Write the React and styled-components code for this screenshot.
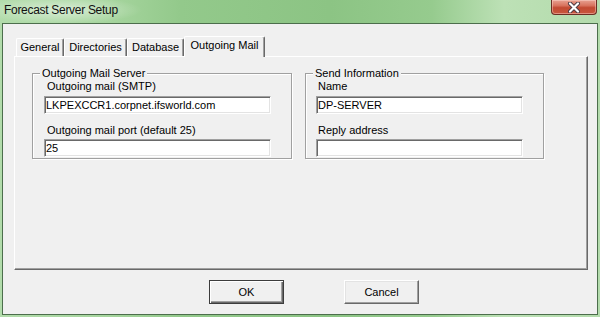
import React from 'react'
import styled, { createGlobalStyle } from 'styled-components'

const GlobalStyle = createGlobalStyle`
    html, body {
        margin: 0;
        padding: 0;
        width: 600px;
        height: 317px;
        overflow: hidden;
        background: #a4d59c;
    }
    * {
        box-sizing: border-box;
    }
`;

const Window = styled.div`
    width: 600px;
    height: 317px;
    display: flex;
    flex-direction: column;
    font-family: "Liberation Sans", Arial, sans-serif;
    font-size: 11px;
    color: #000;
    background:
        radial-gradient(ellipse 80px 14px at 62px 10px, rgba(255,255,255,0.55), rgba(255,255,255,0) 100%),
        linear-gradient(90deg, #b2dcab 0%, #a6d59e 18%, #93c98b 30%, #8cc484 55%, #96cb8e 72%, #bde1b6 84%, #b3dbac 100%);
`;

const TitleBar = styled.div`
    height: 23px;
    display: flex;
    justify-content: space-between;
    align-items: flex-start;
    flex-shrink: 0;
`;

const Title = styled.div`
    padding-left: 4px;
    line-height: 21px;
    font-size: 12px;
    letter-spacing: -0.3px;
    color: #111;
`;

const CloseButton = styled.div`
    width: 46px;
    height: 15px;
    margin-right: 3px;
    border: 1px solid #6b2e24;
    border-top: none;
    border-radius: 0 0 4px 4px;
    background: linear-gradient(#e7a292 0%, #d8735e 40%, #c24a32 55%, #c8583e 100%);
    box-shadow: inset 0 0 0 1px rgba(255, 220, 210, 0.45);
    display: flex;
    align-items: center;
    justify-content: center;
`;

const Frame = styled.div`
    flex: 1;
    display: flex;
    padding: 0 2px 2px 2px;
`;

const Client = styled.div`
    flex: 1;
    display: flex;
    flex-direction: column;
    border: 1px solid #4c6e4c;
    background: #f0f0f0;
    padding: 12px 9px 0 11px;
`;

const TabStrip = styled.div`
    height: 20px;
    display: flex;
    align-items: flex-end;
    padding-left: 2px;
    position: relative;
    z-index: 2;
`;

const Tab = styled.div`
    width: ${p => p.$w}px;
    height: ${p => (p.$active ? 21 : 18)}px;
    margin-bottom: ${p => (p.$active ? -1 : 0)}px;
    background: #f0f0f0;
    border: 1px solid #fff;
    border-right-color: #696969;
    border-bottom: none;
    border-radius: 2px 2px 0 0;
    box-shadow: inset -1px 0 #a0a0a0;
    text-align: center;
    line-height: ${p => (p.$active ? 17 : 16)}px;
    white-space: nowrap;
`;

const Panel = styled.div`
    height: 214px;
    border: 1px solid #fff;
    border-right-color: #696969;
    border-bottom-color: #696969;
    box-shadow: inset -1px -1px #a0a0a0;
    padding: 16px 0 0 17px;
    display: flex;
    gap: 13px;
    align-items: flex-start;
`;

const GroupBox = styled.div`
    width: ${p => p.$w}px;
    height: 86px;
    border: 1px solid #a0a0a0;
    box-shadow: 1px 1px 0 #fff, inset 1px 1px 0 #fff;
    display: flex;
    flex-direction: column;
    padding: 0 20px 1px ${p => p.$inset}px;
`;

const Caption = styled.div`
    align-self: flex-start;
    margin: -7px 0 0 ${p => p.$shift}px;
    padding: 0 2px;
    line-height: 13px;
    background: #f0f0f0;
`;

const Label = styled.div`
    line-height: 13px;
    padding-left: ${p => p.$pad}px;
    margin-top: ${p => p.$top}px;
`;

const Field = styled.input`
    display: block;
    width: 100%;
    height: 18px;
    margin-top: ${p => p.$top}px;
    padding: 0 1px;
    border: 1px solid;
    border-color: #a0a0a0 #fff #fff #a0a0a0;
    box-shadow: inset 1px 1px #696969, inset -1px -1px #e3e3e3;
    background: #fff;
    font-family: "Liberation Sans", Arial, sans-serif;
    font-size: 11px;
    color: #000;
    outline: none;
`;

const ButtonRow = styled.div`
    display: flex;
    gap: 60px;
    margin-top: 10px;
    padding-left: 195px;
`;

const Button = styled.button`
    width: 75px;
    height: 24px;
    padding: 0;
    background: #f0f0f0;
    font-family: "Liberation Sans", Arial, sans-serif;
    font-size: 11px;
    color: #000;
    border: 1px solid;
    border-color: ${p => (p.$default ? '#3c3c3c' : '#fff #696969 #696969 #fff')};
    box-shadow: ${p => (p.$default
        ? 'inset 1px 1px #fff, inset -1px -1px #696969, inset -2px -2px #a0a0a0'
        : 'inset -1px -1px #a0a0a0, inset 1px 1px #e3e3e3')};
`;

const CloseGlyph = () => (
    <svg width="14" height="11" viewBox="0 0 14 11">
        <path d="M3 1.5 L11 9.5 M11 1.5 L3 9.5" stroke="#4a3a44" strokeWidth="4" strokeLinecap="round" />
        <path d="M3 1.5 L11 9.5 M11 1.5 L3 9.5" stroke="#fff" strokeWidth="2.2" strokeLinecap="round" />
    </svg>
);

const tabs = [
    { name: 'General', w: 48 },
    { name: 'Directories', w: 63 },
    { name: 'Database', w: 57 },
    { name: 'Outgoing Mail', w: 81, active: true },
];

const App = () => {
    return (
        <>
            <GlobalStyle />
            <Window>
                <TitleBar>
                    <Title>Forecast Server Setup</Title>
                    <CloseButton><CloseGlyph /></CloseButton>
                </TitleBar>
                <Frame>
                    <Client>
                        <TabStrip>
                            {tabs.map(t => (
                                <Tab key={t.name} $w={t.w} $active={t.active}>{t.name}</Tab>
                            ))}
                        </TabStrip>
                        <Panel>
                            <GroupBox $w={260} $inset={11}>
                                <Caption $shift={-4}>Outgoing Mail Server</Caption>
                                <Label $pad={3} $top={0}>Outgoing mail (SMTP)</Label>
                                <Field $top={3} defaultValue="LKPEXCCR1.corpnet.ifsworld.com" />
                                <Label $pad={3} $top={10}>Outgoing mail port (default 25)</Label>
                                <Field $top={2} defaultValue="25" />
                            </GroupBox>
                            <GroupBox $w={239} $inset={10}>
                                <Caption $shift={-3}>Send Information</Caption>
                                <Label $pad={2} $top={0}>Name</Label>
                                <Field $top={3} defaultValue="DP-SERVER" />
                                <Label $pad={2} $top={10}>Reply address</Label>
                                <Field $top={2} defaultValue="" />
                            </GroupBox>
                        </Panel>
                        <ButtonRow>
                            <Button $default>OK</Button>
                            <Button>Cancel</Button>
                        </ButtonRow>
                    </Client>
                </Frame>
            </Window>
        </>
    )
}

export default App
